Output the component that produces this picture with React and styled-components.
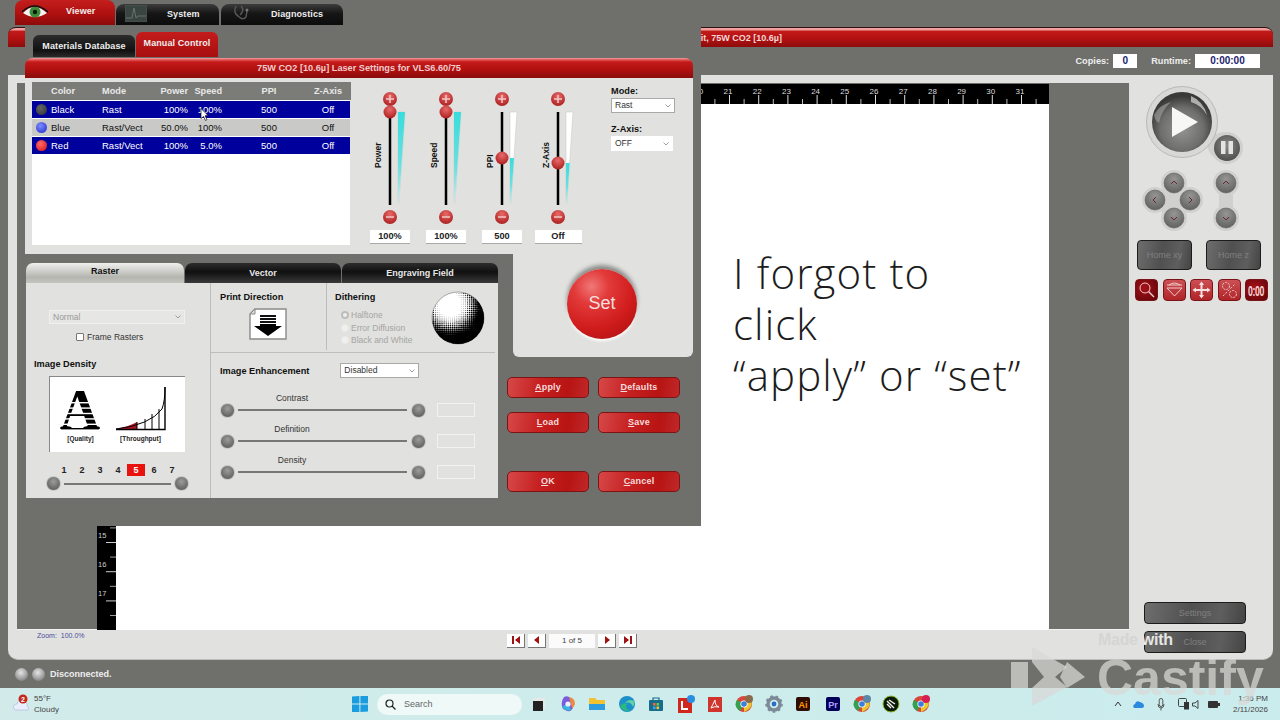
import React from "react";
import styled, { createGlobalStyle } from "styled-components";

const GREY = "#6f706c";
const LIGHT = "#e1e1df";
const FONT = `"Liberation Sans", Arial, sans-serif`;

const GlobalStyle = createGlobalStyle`
	html, body {
		margin: 0;
		padding: 0;
		background: ${GREY};
		font-family: ${FONT};
		overflow: hidden;
	}
	* {
		box-sizing: border-box;
	}
`;

const Page = styled.div`
	position: relative;
	width: 1280px;
	height: 720px;
	display: flex;
	flex-direction: column;
	overflow: hidden;
	background: ${GREY};
`;

const AppArea = styled.div`
	position: relative;
	height: 688px;
	display: flex;
	flex-direction: column;
`;

/* ---- top tabs ---- */
const TopTabs = styled.div`
	height: 25px;
	padding-left: 15px;
	display: flex;
	align-items: flex-end;
`;

const TopTab = styled.div`
	width: ${p => p.$w}px;
	height: ${p => (p.$active ? 25 : 21)}px;
	margin-right: ${p => p.$gap || 0}px;
	border-radius: 8px 8px 0 0;
	background: ${p =>
		p.$active
			? "linear-gradient(#c41e1e, #b01010 55%, #8c0a0a)"
			: "linear-gradient(#3c3c3c, #161616 45%, #0c0c0c)"};
	color: #eee;
	font-size: 9px;
	font-weight: bold;
	display: flex;
	align-items: center;
	padding-bottom: ${p => (p.$active ? 1 : 2)}px;
`;

const TabIcon = styled.svg`
	margin-left: ${p => p.$left}px;
	flex-shrink: 0;
`;

const TabText = styled.span`
	margin-left: ${p => p.$left}px;
	padding-bottom: ${p => p.$lift || 0}px;
	letter-spacing: 0.1px;
`;

/* ---- main window ---- */
const MainWindow = styled.div`
	margin: 2px 7px 0 8px;
	height: 633px;
	display: flex;
	flex-direction: column;
`;

const MainTitle = styled.div`
	height: 20px;
	border-top: 1px solid #301010;
	border-radius: 8px 8px 0 0;
	background: linear-gradient(#f0a0a0 0, #f0a0a0 2px, #c41a1a 3px, #b01010 60%, #8c0c0c);
	color: #f3d6d6;
	font-size: 9px;
	font-weight: bold;
	display: flex;
	justify-content: flex-end;
	align-items: center;
	padding-right: 491px;
`;

const InfoBar = styled.div`
	height: 28px;
	padding-right: 13px;
	display: flex;
	justify-content: flex-end;
	align-items: center;
	color: #eee;
	font-size: 9.2px;
	font-weight: bold;
`;

const InfoBox = styled.div`
	width: ${p => p.$w}px;
	height: 14px;
	margin: 0 ${p => p.$right}px 0 4px;
	background: #fff;
	color: #22226e;
	font-size: 10px;
	line-height: 14px;
	text-align: center;
`;

const MainBody = styled.div`
	flex: 1;
	display: flex;
	min-height: 0;
	background: ${LIGHT};
	border-radius: 0 0 10px 10px;
	border-bottom: 1px solid #bdbdba;
`;

const DocColumn = styled.div`
	flex: 1;
	display: flex;
	flex-direction: column;
	padding: 8px 0 0 9px;
`;

const Workspace = styled.div`
	height: 547px;
	padding: 1px 0 0 80px;
	background: ${GREY};
	border-bottom: 1px solid #f2f2f0;
	display: grid;
	grid-template-columns: 19px 933px;
	grid-template-rows: 20px 1fr;
`;

const RulerCorner = styled.div`
	background: #000;
`;

const RulerH = styled.svg`
	display: block;
	background: #000;
`;

const RulerV = styled.svg`
	display: block;
	background: #000;
`;

const Sheet = styled.div`
	background: #fff;
	padding: 143px 0 0 617px;
	font-family: "Open Sans", sans-serif;
	font-weight: 300;
	font-size: 42px;
	letter-spacing: 1.1px;
	line-height: 51px;
	color: #1c1c1c;
`;

const BottomStrip = styled.div`
	flex: 1;
	display: grid;
	grid-template-columns: 470px auto;
	padding-left: 20px;
`;

const ZoomLabel = styled.div`
	color: #4b4ba0;
	font-size: 7px;
	padding-top: 2px;
	word-spacing: 2px;
`;

const Pager = styled.div`
	display: flex;
	align-items: center;
	gap: 3px;
	height: 13px;
	margin-top: 4px;
`;

const PagerButton = styled.div`
	width: 18px;
	height: 14px;
	background: #fff;
	border-right: 1px solid #777;
	border-bottom: 1px solid #777;
	color: #a01010;
	display: flex;
	align-items: center;
	justify-content: center;
`;

const PagerField = styled.div`
	width: 46px;
	height: 14px;
	background: #fbfbfb;
	color: #444;
	font-size: 8px;
	line-height: 14px;
	text-align: center;
`;

const SidePanel = styled.div`
	width: 144px;
	display: flex;
	flex-direction: column;
	padding-bottom: 6px;
`;

const PlayGraphic = styled.svg`
	display: block;
	margin: 10px 0 0 16px;
`;

const PadGraphic = styled.svg`
	display: block;
	margin: 3px 0 0 11px;
`;

const HomeRow = styled.div`
	display: flex;
	gap: 14px;
	margin: 7px 0 0 8px;
`;

const GreyButton = styled.div`
	width: ${p => p.$w}px;
	height: ${p => p.$h}px;
	border: 1px solid #1c1c1c;
	border-radius: 4px;
	background: linear-gradient(100deg, #6e6e6e 0, #505050 45%, #5e5e5e 75%, #444 100%);
	color: #808080;
	font-size: 9px;
	display: flex;
	align-items: center;
	justify-content: center;
`;

const ToolRow = styled.div`
	display: flex;
	gap: 4.5px;
	margin: 9px 0 0 6px;
`;

const ToolButton = styled.div`
	width: 23px;
	height: 22px;
	border-radius: 4px;
	background: ${p =>
		p.$active
			? "radial-gradient(circle at 40% 40%, #a51218, #5e0408)"
			: "linear-gradient(#cc5054, #b02428)"};
	border: 1px solid #7a1418;
	display: flex;
	align-items: center;
	justify-content: center;
	color: #f5d5d5;
	font-size: 15px;
	font-weight: bold;
`;

const ToolClock = styled.span`
	display: block;
	transform: scaleX(0.58);
	letter-spacing: -0.5px;
`;

const SideBottom = styled.div`
	margin-top: auto;
	display: flex;
	flex-direction: column;
	gap: 7px;
	padding-left: 15px;
`;

const StatusBar = styled.div`
	height: 28px;
	padding-left: 15px;
	display: flex;
	align-items: center;
	gap: 4px;
	color: #eee;
	font-size: 9px;
	font-weight: bold;
`;

const StatusLight = styled.div`
	width: 13px;
	height: 13px;
	border-radius: 50%;
	background: radial-gradient(circle at 45% 35%, #e4e4e4, #9a9a9a 60%, #666);
`;

const StatusText = styled.span`
	margin-left: 1px;
`;

/* ---- dialog ---- */
const Dialog = styled.div`
	position: absolute;
	left: 25px;
	top: 27px;
	width: 676px;
	height: 499px;
	background: ${GREY};
	padding-right: 8px;
`;

const DialogTabs = styled.div`
	height: 31px;
	padding: 4px 0 0 8px;
	display: flex;
	align-items: flex-end;
	gap: 1px;
`;

const DialogTab = styled.div`
	width: ${p => p.$w}px;
	height: ${p => (p.$active ? 25 : 22)}px;
	margin-bottom: 1px;
	border-radius: 6px 6px 0 0;
	background: ${p =>
		p.$active ? "linear-gradient(#c41c1c, #a80e0e)" : "linear-gradient(#2c2c2c, #111 70%, #2a2a2a)"};
	color: #eee;
	font-size: 9px;
	font-weight: bold;
	letter-spacing: 0.1px;
	text-align: center;
	line-height: 22px;
`;

const DialogTitle = styled.div`
	height: 20px;
	border-radius: 8px 8px 0 0;
	background: linear-gradient(#f0a0a0 0, #e05050 2px, #c41a1a 4px, #b01010 60%, #8a0c0c);
	color: #f0cccc;
	font-size: 9.2px;
	font-weight: bold;
	text-align: center;
	line-height: 20px;
`;

const UpperPanel = styled.div`
	height: 176px;
	padding: 4px 0 0 7px;
	background: ${LIGHT};
	display: flex;
`;

const ColorTable = styled.div`
	position: relative;
	width: 318px;
	height: 163px;
	background: #fff;
	display: flex;
	flex-direction: column;
	gap: 1px;
	font-size: 9.5px;
`;

const GRID_COLS = "19px 51px 55px 31px 34px 94px 24px";

const TableHead = styled.div`
	height: 18px;
	margin-right: -1px;
	background: #7b7c78;
	color: #e8e8e8;
	font-size: 9.2px;
	font-weight: bold;
	display: grid;
	grid-template-columns: ${GRID_COLS};
	align-items: center;
`;

const TableRow = styled.div`
	height: 17px;
	background: ${p => (p.$selected ? "#00009c" : "#c9c9c7")};
	color: ${p => (p.$selected ? "#fff" : "#111")};
	display: grid;
	grid-template-columns: ${GRID_COLS};
	align-items: center;
`;

const Cell = styled.span`
	justify-self: ${p => p.$align || "start"};
	white-space: nowrap;
`;

const ColorDot = styled.span`
	justify-self: center;
	width: 11px;
	height: 11px;
	border-radius: 50%;
	background: radial-gradient(circle at 40% 35%, ${p => p.$light}, ${p => p.$dark});
`;

const Pointer = styled.svg`
	position: absolute;
	left: 168px;
	top: 26px;
`;

const SliderGroup = styled.div`
	display: flex;
	margin-left: 12px;
`;

const SliderCol = styled.div`
	position: relative;
	width: 56px;
	padding-top: 8px;
	display: flex;
	flex-direction: column;
	align-items: center;
`;

const SliderArt = styled.svg`
	display: block;
`;

const SliderLabel = styled.span`
	position: absolute;
	left: 11px;
	top: ${p => 25 + p.$drop}px;
	height: 96px;
	writing-mode: vertical-rl;
	transform: rotate(180deg);
	text-align: center;
	font-size: 8.5px;
	font-weight: bold;
	color: #111;
`;

const ValueBox = styled.div`
	flex-shrink: 0;
	width: ${p => p.$w}px;
	height: 14px;
	margin-top: 4px;
	background: #fff;
	border-bottom: 1px solid #aaa;
	font-size: 9.2px;
	font-weight: bold;
	line-height: 13px;
	text-align: center;
	color: #222;
`;

const ModeCol = styled.div`
	margin-left: 25px;
	padding-top: 4px;
	display: flex;
	flex-direction: column;
`;

const FieldLabel = styled.div`
	font-size: 9.2px;
	font-weight: bold;
	color: #111;
	margin-bottom: 2px;
	margin-top: ${p => p.$top || 0}px;
`;

const Select = styled.div`
	position: relative;
	width: ${p => p.$w}px;
	height: ${p => p.$h || 15}px;
	background: ${p => (p.$disabled ? "#e6e6e4" : "#fff")};
	border: 1px solid ${p => (p.$disabled ? "#f0f0ee" : p.$plain ? "#fff" : "#a9a9a9")};
	color: ${p => (p.$disabled ? "#999" : "#333")};
	font-size: 8.5px;
	line-height: ${p => (p.$h || 15) - 2}px;
	padding-left: 3px;
`;

const Caret = styled.svg`
	position: absolute;
	right: 3px;
	top: 50%;
	margin-top: -2px;
`;

const LowerRow = styled.div`
	display: flex;
`;

const TabPanel = styled.div`
	width: 472px;
	margin: 9px 0 0 1px;
`;

const PanelTabs = styled.div`
	display: flex;
	height: 20px;
	gap: 1px;
`;

const PanelTab = styled.div`
	width: ${p => p.$w}px;
	border-radius: 7px 7px 0 0;
	background: ${p =>
		p.$active ? "linear-gradient(#f0f0ee, #b5b5b0 70%, #c5c5c0)" : "linear-gradient(#2d2d2d, #101010 45%, #3a3a3a)"};
	color: ${p => (p.$active ? "#111" : "#e8e8e8")};
	font-size: 9px;
	font-weight: bold;
	line-height: ${p => (p.$active ? 17 : 20)}px;
	text-align: center;
`;

const PanelBody = styled.div`
	height: 215px;
	background: ${LIGHT};
	display: grid;
	grid-template-columns: 185px 1fr;
`;

const RasterCol = styled.div`
	border-right: 1px solid #bdbdba;
	display: flex;
	flex-direction: column;
`;

const NormalSelect = styled(Select)`
	margin: 27px 0 0 23px;
`;

const FrameRow = styled.label`
	display: flex;
	align-items: center;
	gap: 3px;
	margin: 8px 0 0 50px;
	font-size: 8.5px;
	color: #333;
`;

const CheckBox = styled.span`
	width: 8px;
	height: 8px;
	background: #fff;
	border: 1px solid #777;
	border-radius: 1px;
`;

const GroupLabel = styled.div`
	font-size: 9.2px;
	font-weight: bold;
	color: #111;
`;

const DensityLabel = styled(GroupLabel)`
	margin: 17px 0 0 8px;
`;

const DensityBox = styled.div`
	width: 136px;
	height: 76px;
	margin: 7px 0 0 23px;
	background: #fff;
	border-top: 1px solid #888;
	border-left: 1px solid #888;
`;

const DensityArt = styled.svg`
	display: block;
`;

const NumberRow = styled.div`
	display: grid;
	grid-template-columns: repeat(7, 18px);
	margin: 12px 0 0 29px;
	height: 12px;
	font-size: 9px;
	font-weight: bold;
	text-align: center;
	line-height: 12px;
	color: #222;
`;

const NumberCell = styled.span`
	background: ${p => (p.$active ? "#e8120f" : "transparent")};
	color: ${p => (p.$active ? "#fff" : "#222")};
`;

const Knob = styled.span`
	flex-shrink: 0;
	display: block;
	width: 15px;
	height: 15px;
	border-radius: 50%;
	background: radial-gradient(circle at 50% 35%, #9c9c9a, #6a6a68 65%, #555);
	border: 1px solid #c6c6c4;
`;

const DensitySlider = styled.div`
	display: flex;
	align-items: center;
	gap: 3px;
	margin: 0 0 0 20px;
`;

const SlideLine = styled.span`
	display: block;
	flex-shrink: 0;
	width: ${p => p.$w}px;
	height: 2px;
	background: #777;
`;

const OptionsCol = styled.div`
	display: flex;
	flex-direction: column;
`;

const TopOptions = styled.div`
	height: 70px;
	display: flex;
	border-bottom: 1px solid #bdbdba;
	margin-right: 3px;
`;

const PrintBox = styled.div`
	width: 116px;
	padding: 9px 0 0 9px;
	border-right: 1px solid #bdbdba;
	margin-bottom: 2px;
`;

const PrintIcon = styled.svg`
	display: block;
	margin: 6px 0 0 29px;
`;

const DitherBox = styled.div`
	position: relative;
	flex: 1;
	padding: 9px 0 0 8px;
`;

const RadioRow = styled.div`
	display: flex;
	align-items: center;
	gap: 2px;
	height: 12.5px;
	margin-left: 6px;
	font-size: 8.5px;
	color: #a5a5a3;
`;

const RadioList = styled.div`
	margin-top: 7px;
`;

const Radio = styled.span`
	width: 8px;
	height: 8px;
	border-radius: 50%;
	background: #efefed;
	border: ${p => (p.$on ? "2px solid #bdbdbb" : "1px solid #ebebe9")};
`;

const Sphere = styled.svg`
	position: absolute;
	left: 104px;
	top: 8px;
`;

const EnhanceHead = styled.div`
	display: flex;
	align-items: center;
	padding: 10px 0 0 9px;
`;

const EnhanceSelect = styled(Select)`
	margin-left: 31px;
`;

const EnhanceList = styled.div`
	margin-top: 8.5px;
	padding-left: 9px;
`;

const EnhanceRow = styled.div`
	height: 31px;
	display: flex;
	align-items: flex-end;
`;

const EnhanceTrack = styled.div`
	width: 176px;
	padding: 0 3px 6.5px;
	display: flex;
	flex-direction: column;
`;

const EnhanceName = styled.div`
	width: 108px;
	text-align: center;
	font-size: 8.5px;
	color: #333;
	line-height: 12px;
	margin-bottom: 5px;
`;

const EmptyField = styled.div`
	width: 38px;
	height: 14px;
	margin: 0 0 0.5px 11px;
	border: 1px solid #f2f2f0;
`;

const SetCol = styled.div`
	width: 195px;
`;

const SetPanel = styled.div`
	width: 180px;
	height: 103px;
	margin-left: 15px;
	background: ${LIGHT};
	border-radius: 0 0 6px 6px;
	display: flex;
	align-items: center;
	justify-content: center;
	padding: 0 2px 4px 0;
`;

const SetButton = styled.div`
	width: 70px;
	height: 70px;
	border-radius: 50%;
	background: radial-gradient(circle at 35% 25%, #f07878 0, #e23a3a 25%, #d01c1c 60%, #a80e0e 100%);
	box-shadow: 0 -4px 4px #8a8a88, 0 2px 3px #fff;
	color: #f6dede;
	font-size: 18px;
	display: flex;
	align-items: center;
	justify-content: center;
`;

const ActionGrid = styled.div`
	display: grid;
	grid-template-columns: 82px 82px;
	column-gap: 9px;
	margin: 20px 0 0 9px;
`;

const RedButton = styled.div`
	height: 21px;
	margin-bottom: ${p => p.$gap}px;
	border: 1px solid #7c1414;
	border-radius: 5px;
	background: linear-gradient(100deg, #d64848 0, #c62020 40%, #b81414 75%, #c02828 100%);
	color: #f3dcdc;
	font-size: 9px;
	font-weight: bold;
	line-height: 19px;
	text-align: center;
	letter-spacing: 0.2px;
	u {
		text-underline-offset: 1px;
	}
`;

/* ---- taskbar ---- */
const Taskbar = styled.div`
	height: 32px;
	background: linear-gradient(90deg, #d2ebea, #cdeceb 50%, #cbeced);
	display: flex;
	align-items: center;
	position: relative;
`;

const Weather = styled.div`
	width: 352px;
	padding-left: 12px;
	display: flex;
	align-items: center;
	gap: 4px;
	font-size: 8px;
	color: #333;
	line-height: 11px;
`;

const WeatherLines = styled.div`
	color: #444;
`;

const Search = styled.div`
	width: 145px;
	height: 21px;
	margin: 0 0 0 9px;
	border-radius: 11px;
	background: #eef9f8;
	padding-left: 8px;
	display: flex;
	align-items: center;
	gap: 8px;
	font-size: 9px;
	color: #666;
`;

const TrayIcons = styled.div`
	display: flex;
	align-items: center;
	margin-left: 2px;
`;

const AppSlot = styled.div`
	width: 29.4px;
	display: flex;
	justify-content: center;
`;

const Tray = styled.div`
	margin-left: auto;
	display: flex;
	align-items: center;
	padding-right: 12px;
`;

const Clock = styled.div`
	margin-left: 13px;
	text-align: right;
	font-size: 8px;
	line-height: 11px;
	color: #444;
`;

const TraySvg = styled.svg`
	display: block;
	margin-left: ${p => p.$left}px;
`;

/* ---- watermark ---- */
const Watermark = styled.div`
	position: absolute;
	left: 1008px;
	top: 630px;
	width: 272px;
	height: 90px;
	pointer-events: none;
`;

const WatermarkLogo = styled.svg`
	position: absolute;
	left: 0;
	top: 17px;
`;

const MadeWith = styled.div`
	position: absolute;
	left: 90px;
	top: 1px;
	font-size: 16px;
	font-weight: bold;
	color: rgba(205, 205, 203, 0.6);
	letter-spacing: -0.3px;
	span {
		color: #e6e6e4;
	}
`;

const Brand = styled.div`
	position: absolute;
	left: 89px;
	top: 19px;
	font-size: 50px;
	font-weight: bold;
	color: rgba(216, 216, 214, 0.72);
`;

const rows = [
	{ name: "Black", mode: "Rast", power: "100%", speed: "100%", selected: true, light: "#666", dark: "#2c2c34" },
	{ name: "Blue", mode: "Rast/Vect", power: "50.0%", speed: "100%", light: "#7f8cff", dark: "#1a26c8" },
	{ name: "Red", mode: "Rast/Vect", power: "100%", speed: "5.0%", selected: true, light: "#ff6a6a", dark: "#d80e0e" }
];

const sliders = [
	{ id: "power", label: "Power", value: "100%", level: 22, drop: 0, box: 40 },
	{ id: "speed", label: "Speed", value: "100%", level: 22, drop: 0, box: 40 },
	{ id: "ppi", label: "PPI", value: "500", level: 68, drop: 6, box: 40 },
	{ id: "z", label: "Z-Axis", value: "Off", level: 73, drop: 0, box: 47 }
];

const range = (from, to) => Array.from({ length: to - from + 1 }, (_, i) => from + i);

const CaretIcon = () => (
	<Caret width="6" height="4" viewBox="0 0 6 4">
		<path d="M0.5 0.5 L3 3 L5.5 0.5" fill="none" stroke="#888" strokeWidth="0.8" />
	</Caret>
);

const TopRuler = () => (
	<RulerH width="933" height="20" viewBox="0 0 933 20">
		{range(1, 31).map(n => {
			const x = 613 + (n - 21) * 29.2;
			return (
				<g key={n}>
					<text x={x - 1} y="10" fontSize="8" fill="#ddd" textAnchor="middle" fontFamily={FONT}>
						{n}
					</text>
					<rect x={x} y="11" width="1" height="9" fill="#ddd" />
					<rect x={x + 14.6} y="15" width="1" height="5" fill="#bbb" />
				</g>
			);
		})}
	</RulerH>
);

const SideRuler = () => (
	<RulerV width="19" height="526" viewBox="0 0 19 526">
		{range(1, 17).map(n => {
			const y = 438 + (n - 15) * 29.2;
			return (
				<g key={n}>
					<text x="1" y={y - 4} fontSize="7.5" fill="#ccc" fontFamily={FONT}>
						{n}
					</text>
					<rect x="9" y={y} width="10" height="1" fill="#ccc" />
					<rect x="13" y={y + 14.6} width="6" height="1" fill="#999" />
				</g>
			);
		})}
	</RulerV>
);

const Eye = () => (
	<TabIcon $left={7} width="26" height="14" viewBox="0 0 26 14">
		<path d="M1 8 Q12 -4 25 8 Q13 16 1 8 Z" fill="#f4f4f4" />
		<circle cx="13" cy="7" r="5.5" fill="#3f8a3a" />
		<circle cx="13" cy="7" r="2.2" fill="#0c1a0c" />
		<path d="M0 7 Q12 -5 26 7" fill="none" stroke="#111" strokeWidth="1.5" />
	</TabIcon>
);

const PulseBox = () => (
	<TabIcon $left={9} width="22" height="17" viewBox="0 0 22 17">
		<rect width="22" height="17" fill="#3a4440" stroke="#4d5652" />
		<path d="M1 13 H7 L9 3 L11 13 L13 11 H21" fill="none" stroke="#66736c" />
	</TabIcon>
);

const Stethoscope = () => (
	<TabIcon $left={12} width="16" height="18" viewBox="0 0 16 18">
		<path d="M3 1 Q0 8 5 11 Q10 16 13 12 L14 6 M8 1 Q12 5 7 10" fill="none" stroke="#555" strokeWidth="1.5" />
		<circle cx="14" cy="5" r="1.5" fill="#777" />
	</TabIcon>
);

const PlayCluster = () => (
	<PlayGraphic width="100" height="80" viewBox="0 0 100 80">
		<defs>
			<radialGradient id="playFill" cx="50%" cy="62%" r="55%">
				<stop offset="0" stopColor="#949492" />
				<stop offset="0.65" stopColor="#6e6e6c" />
				<stop offset="1" stopColor="#3a3a38" />
			</radialGradient>
			<radialGradient id="pauseFill" cx="50%" cy="40%" r="65%">
				<stop offset="0" stopColor="#8a8a88" />
				<stop offset="1" stopColor="#4a4a48" />
			</radialGradient>
		</defs>
		<path d="M56 50 Q70 50 78 47 L90 60 L82 79 L66 70 Z" fill="#d0d0ce" />
		<circle cx="37" cy="37" r="35.5" fill="#d8d8d6" stroke="#b9b9b7" />
		<circle cx="82" cy="63" r="16" fill="#d0d0ce" />
		<circle cx="37" cy="37" r="30" fill="url(#playFill)" />
		<path d="M46 11 Q58 16 62 30 Q56 20 46 17 Z" fill="#c8c8c6" opacity="0.8" />
		<path d="M9 30 Q14 20 26 17 Q16 26 14 38 Q10 36 9 30 Z" fill="#a5a5a3" opacity="0.6" />
		<path d="M27 22 L53 37 L27 52 Z" fill="#f7f7f5" />
		<circle cx="82" cy="63" r="13" fill="url(#pauseFill)" />
		<rect x="76" y="56" width="4.5" height="13" fill="#e4e4e2" />
		<rect x="83.5" y="56" width="4.5" height="13" fill="#e4e4e2" />
	</PlayGraphic>
);

const padButtons = [
	{ x: 34, y: 15, d: "M-3 1 L0 -2 L3 1" },
	{ x: 34, y: 50, d: "M-3 -1 L0 2 L3 -1" },
	{ x: 15, y: 32, d: "M1 -3 L-2 0 L1 3" },
	{ x: 50, y: 32, d: "M-1 -3 L2 0 L-1 3" },
	{ x: 86, y: 15, d: "M-3 1 L0 -2 L3 1" },
	{ x: 86, y: 50, d: "M-3 -1 L0 2 L3 -1" }
];

const MotionPad = () => (
	<PadGraphic width="105" height="65" viewBox="0 0 105 65">
		<defs>
			<radialGradient id="padFill" cx="50%" cy="30%" r="75%">
				<stop offset="0" stopColor="#969694" />
				<stop offset="1" stopColor="#5e5e5c" />
			</radialGradient>
		</defs>
		<rect x="22" y="15" width="24" height="35" fill="#d0d0ce" />
		<rect x="15" y="22" width="35" height="20" fill="#d0d0ce" />
		<rect x="79" y="15" width="14" height="35" fill="#d0d0ce" />
		{padButtons.map(b => (
			<circle key={`h${b.x}${b.y}`} cx={b.x} cy={b.y} r="13" fill="#d0d0ce" />
		))}
		{padButtons.map(b => (
			<g key={`b${b.x}${b.y}`} transform={`translate(${b.x} ${b.y})`}>
				<circle r="10" fill="url(#padFill)" stroke="#5e5e5c" strokeWidth="0.6" />
				<path d={b.d} fill="none" stroke="#6a2432" strokeWidth="1" />
			</g>
		))}
	</PadGraphic>
);

const ToolIcon = ({ children }) => (
	<svg width="19" height="18" viewBox="0 0 19 18" fill="none" stroke="#f0caca" strokeWidth="1">
		{children}
	</svg>
);

const Slider = ({ id, level }) => {
	const edge = y => 36 + 1 + 6 * (1 - (y - 22) / 91);
	const Button = ({ cy, sign }) => (
		<g>
			<circle cx="28" cy={cy} r="7" fill={`url(#btn${id})`} />
			<rect x="24" y={cy - 0.75} width="8" height="1.5" fill="#f3c9c9" />
			{sign && <rect x="27.25" y={cy - 4} width="1.5" height="8" fill="#f3c9c9" />}
		</g>
	);
	return (
		<SliderArt width="56" height="136" viewBox="0 0 56 136">
			<defs>
				<radialGradient id={`btn${id}`} cx="50%" cy="30%" r="75%">
					<stop offset="0" stopColor="#e86a6a" />
					<stop offset="1" stopColor="#a81a1a" />
				</radialGradient>
				<linearGradient id={`cyan${id}`} x1="0" y1="0" x2="0" y2="1">
					<stop offset="0" stopColor="#38dcdc" />
					<stop offset="0.6" stopColor="#6ddfdf" />
					<stop offset="1" stopColor="#cfe6e6" />
				</linearGradient>
			</defs>
			<rect x="26.75" y="22" width="2.5" height="93" fill="#000" />
			<path d="M36 22 H43 L37 113 H36 Z" fill="#fff" stroke="#c4c4c2" strokeWidth="0.5" />
			<path d={`M36 ${level} H${edge(level)} L37 113 H36 Z`} fill={`url(#cyan${id})`} />
			<Button cy={9} sign />
			<Button cy={127} />
			<circle cx="28" cy={level} r="6.5" fill={`url(#btn${id})`} />
		</SliderArt>
	);
};

const DensityDrawing = () => (
	<DensityArt width="135" height="75" viewBox="0 0 135 75">
		<text x="30" y="52" fontSize="56" fontWeight="bold" fontFamily={`"Liberation Serif", serif`} textAnchor="middle" fill="#000">
			A
		</text>
		{range(0, 4).map(i => (
			<rect key={i} x="8" y={25 + i * 5.4} width="46" height="1.4" fill="#fff" />
		))}
		<rect x="11" y="51" width="38" height="1.4" fill="#000" />
		<path d="M66 52 Q78 50 87 45 L87 52 Z" fill="#a81420" />
		<path d="M66 52 Q100 48 112 32 Q115 24 115 10" fill="none" stroke="#000" strokeWidth="1" />
		<path d="M66 52.5 H115 V10" fill="none" stroke="#000" strokeWidth="1.4" />
		<path d="M87 45 V52 M95 42 V52 M102 37 V52 M109 32 V52" stroke="#000" strokeWidth="1" />
		<text x="30.5" y="64" fontSize="6.5" fontWeight="bold" textAnchor="middle" fontFamily={FONT} fill="#222">
			[Quality]
		</text>
		<text x="90.5" y="64" fontSize="6.5" fontWeight="bold" textAnchor="middle" fontFamily={FONT} fill="#222">
			[Throughput]
		</text>
	</DensityArt>
);

const HalftoneBall = () => {
	const dots = [];
	for (let y = 0.5; y < 54; y += 1.9) {
		for (let x = 0.5; x < 54; x += 1.9) {
			const dist = Math.hypot(x - 19, y - 14) / 36;
			const size = Math.min(1.45, Math.max(0, (dist - 0.25) * 2.2));
			if (size > 0.12) dots.push(<circle key={`${x}-${y}`} cx={x} cy={y} r={size} fill="#000" />);
		}
	}
	return (
		<Sphere width="54" height="54" viewBox="0 0 54 54">
			<defs>
				<clipPath id="ballClip">
					<circle cx="27" cy="27" r="26" />
				</clipPath>
			</defs>
			<circle cx="27" cy="27" r="26" fill="#fff" stroke="#777" strokeWidth="0.6" />
			<g clipPath="url(#ballClip)">{dots}</g>
		</Sphere>
	);
};

const Icon = ({ children, w = 18, h = 18 }) => (
	<svg width={w} height={h} viewBox={`0 0 ${w} ${h}`}>
		{children}
	</svg>
);

const ChromeMark = ({ badge }) => (
	<Icon>
		<circle cx="9" cy="9" r="8" fill="#d8463a" />
		<path d="M2 5 L9 9 L5 16 Q-2 11 2 5 Z" fill="#35a04e" />
		<path d="M9 9 L16 6 Q19 13 9 17 Z" fill="#e9c72e" />
		<circle cx="9" cy="9" r="3.6" fill="#fff" />
		<circle cx="9" cy="9" r="2.8" fill="#3e7de0" />
		{badge && <circle cx="14" cy="4" r="4" fill={badge} />}
	</Icon>
);

const appIcons = [
	<Icon key="tasks">
		<rect x="4" y="3" width="11" height="11" fill="#e8e8e8" />
		<rect x="3" y="6" width="10" height="10" fill="#222" />
	</Icon>,
	<Icon key="copilot">
		<path d="M5 2 Q9 0 11 3 L14 12 Q13 17 8 16 L4 14 Q1 8 5 2 Z" fill="#7a5be0" />
		<path d="M10 2 Q16 3 16 9 Q15 12 13 13 Z" fill="#ee8a3c" />
		<path d="M3 12 Q7 17 12 15 L9 8 Z" fill="#36b6d8" />
		<circle cx="9" cy="9" r="2.6" fill="#eef" />
	</Icon>,
	<Icon key="folder">
		<path d="M1 3 H7 L9 5 H17 V15 H1 Z" fill="#f2c230" />
		<rect x="1" y="9" width="16" height="6" fill="#2f9ce0" />
	</Icon>,
	<Icon key="edge">
		<circle cx="9" cy="9" r="8" fill="#1b90c9" />
		<path d="M2 11 Q4 17 12 16 Q6 13 9 9 Q5 7 2 11 Z" fill="#2ab87e" />
		<path d="M7 8 Q13 6 15 12 Q17 9 16 6 Q11 3 7 8 Z" fill="#62d2a2" />
	</Icon>,
	<Icon key="store">
		<rect x="2" y="5" width="14" height="11" rx="1" fill="#176c8c" />
		<path d="M6 5 V3 H12 V5" fill="none" stroke="#176c8c" strokeWidth="1.2" />
		<rect x="6" y="8" width="2.6" height="2.6" fill="#f2683a" />
		<rect x="9.5" y="8" width="2.6" height="2.6" fill="#7cc242" />
		<rect x="6" y="11.5" width="2.6" height="2.6" fill="#3aa6e8" />
		<rect x="9.5" y="11.5" width="2.6" height="2.6" fill="#f4c430" />
	</Icon>,
	<Icon key="lastpass">
		<rect x="1" y="3" width="14" height="15" fill="#d2271d" />
		<path d="M5 6 V14 H11" fill="none" stroke="#fff" strokeWidth="2" />
		<circle cx="14" cy="4" r="4" fill="#2a8ee0" />
	</Icon>,
	<Icon key="acrobat">
		<rect x="2" y="2" width="14" height="15" fill="#d0342c" />
		<path d="M5 13 Q9 5 9 5 Q9 11 13 12 Q8 11 5 13 Z" fill="none" stroke="#fff" strokeWidth="1" />
	</Icon>,
	<ChromeMark key="c1" badge="#8a6a4a" />,
	<Icon key="gear">
		<circle cx="9" cy="9" r="6" fill="none" stroke="#7b8a96" strokeWidth="3.4" />
		<circle cx="9" cy="9" r="8" fill="none" stroke="#7b8a96" strokeWidth="1.6" strokeDasharray="2.6 3" />
		<circle cx="9" cy="9" r="2.4" fill="#2a6cc8" />
	</Icon>,
	<Icon key="ai">
		<rect x="2" y="2" width="14" height="14" rx="2" fill="#2e0d00" />
		<text x="9" y="12.5" fontSize="9" fontWeight="bold" textAnchor="middle" fontFamily={FONT} fill="#ff9a00">
			Ai
		</text>
	</Icon>,
	<Icon key="pr">
		<rect x="2" y="2" width="14" height="14" rx="2" fill="#00005b" />
		<text x="9" y="12.5" fontSize="9" fontWeight="bold" textAnchor="middle" fontFamily={FONT} fill="#b3a2ff">
			Pr
		</text>
	</Icon>,
	<ChromeMark key="c2" badge="#5c88a8" />,
	<Icon key="green">
		<circle cx="9" cy="9" r="8" fill="#0d1a06" stroke="#8ab32a" strokeWidth="1" />
		<path d="M5 6 L12 13 M7 5 L13 9 M5 9 L9 13" stroke="#f2f2f2" strokeWidth="1.4" />
	</Icon>,
	<ChromeMark key="c3" badge="#d81e4e" />
];

const App = () => (
	<Page>
		<GlobalStyle />
		<AppArea>
			<TopTabs>
				<TopTab $w={100} $gap={1} $active>
					<Eye />
					<TabText $left={18} $lift={3}>Viewer</TabText>
				</TopTab>
				<TopTab $w={103} $gap={2}>
					<PulseBox />
					<TabText $left={20}>System</TabText>
				</TopTab>
				<TopTab $w={122}>
					<Stethoscope />
					<TabText $left={22}>Diagnostics</TabText>
				</TopTab>
			</TopTabs>

			<MainWindow>
				<MainTitle>Laser Unit, 75W CO2 [10.6µ]</MainTitle>
				<InfoBar>
					Copies:
					<InfoBox $w={24} $right={14}>0</InfoBox>
					Runtime:
					<InfoBox $w={65} $right={0}>0:00:00</InfoBox>
				</InfoBar>
				<MainBody>
					<DocColumn>
						<Workspace>
							<RulerCorner />
							<TopRuler />
							<SideRuler />
							<Sheet>
								I forgot to
								<br />
								click
								<br />
								“apply” or “set”
							</Sheet>
						</Workspace>
						<BottomStrip>
							<ZoomLabel>Zoom: 100.0%</ZoomLabel>
							<Pager>
								<PagerButton>
									<svg width="8" height="8" viewBox="0 0 8 8" fill="#a01010"><rect width="2" height="8" /><path d="M8 0 V8 L3 4 Z" /></svg>
								</PagerButton>
								<PagerButton>
									<svg width="6" height="8" viewBox="0 0 6 8" fill="#a01010"><path d="M5 0 V8 L0 4 Z" /></svg>
								</PagerButton>
								<PagerField>1 of 5</PagerField>
								<PagerButton>
									<svg width="6" height="8" viewBox="0 0 6 8" fill="#a01010"><path d="M1 0 V8 L6 4 Z" /></svg>
								</PagerButton>
								<PagerButton>
									<svg width="8" height="8" viewBox="0 0 8 8" fill="#a01010"><path d="M0 0 V8 L5 4 Z" /><rect x="6" width="2" height="8" /></svg>
								</PagerButton>
							</Pager>
						</BottomStrip>
					</DocColumn>
					<SidePanel>
						<PlayCluster />
						<MotionPad />
						<HomeRow>
							<GreyButton $w={55} $h={30}>Home xy</GreyButton>
							<GreyButton $w={55} $h={30}>Home z</GreyButton>
						</HomeRow>
						<ToolRow>
							<ToolButton $active>
								<ToolIcon>
									<circle cx="8" cy="7" r="5" />
									<path d="M11.5 10.5 L17 16" strokeWidth="1.4" />
								</ToolIcon>
							</ToolButton>
							<ToolButton>
								<ToolIcon>
									<path d="M2 4 H17 M2 7 H17 L9.5 15 Z M4 4 Q9 0 15 4" />
								</ToolIcon>
							</ToolButton>
							<ToolButton>
								<ToolIcon>
									<path d="M9.5 2 V16 M2 9 H17" strokeWidth="2" stroke="#f7e0e0" />
									<path d="M9.5 0.5 L7 4 H12 Z M9.5 17.5 L7 14 H12 Z M0.5 9 L4 6.5 V11.5 Z M18.5 9 L15 6.5 V11.5 Z" fill="#f7e0e0" stroke="none" />
								</ToolIcon>
							</ToolButton>
							<ToolButton>
								<ToolIcon>
									<circle cx="6" cy="5" r="3.5" strokeDasharray="2 1" />
									<circle cx="13" cy="13" r="3.5" strokeDasharray="2 1" />
									<path d="M3 15 L15 3" strokeDasharray="2 1.5" />
								</ToolIcon>
							</ToolButton>
							<ToolButton $active><ToolClock>0:00</ToolClock></ToolButton>
						</ToolRow>
						<SideBottom>
							<GreyButton $w={102} $h={22}>Settings</GreyButton>
							<GreyButton $w={102} $h={22}>Close</GreyButton>
						</SideBottom>
					</SidePanel>
				</MainBody>
			</MainWindow>

			<StatusBar>
				<StatusLight />
				<StatusLight />
				<StatusText>Disconnected.</StatusText>
			</StatusBar>

			<Dialog>
				<DialogTabs>
					<DialogTab $w={102}>Materials Database</DialogTab>
					<DialogTab $w={82} $active>Manual Control</DialogTab>
				</DialogTabs>
				<DialogTitle>75W CO2 [10.6µ] Laser Settings for VLS6.60/75</DialogTitle>
				<UpperPanel>
					<ColorTable>
						<TableHead>
							<span />
							<Cell>Color</Cell>
							<Cell>Mode</Cell>
							<Cell $align="end">Power</Cell>
							<Cell $align="end">Speed</Cell>
							<Cell $align="center">PPI</Cell>
							<Cell $align="center">Z-Axis</Cell>
						</TableHead>
						{rows.map(row => (
							<TableRow key={row.name} $selected={row.selected}>
								<ColorDot $light={row.light} $dark={row.dark} />
								<Cell>{row.name}</Cell>
								<Cell>{row.mode}</Cell>
								<Cell $align="end">{row.power}</Cell>
								<Cell $align="end">{row.speed}</Cell>
								<Cell $align="center">500</Cell>
								<Cell $align="center">Off</Cell>
							</TableRow>
						))}
						<Pointer width="9" height="13" viewBox="0 0 9 13">
							<path d="M1 0.5 V10.5 L3.5 8.5 L5.5 12.5 L7 11.5 L5 7.8 L8 7.5 Z" fill="#fff" stroke="#111" strokeWidth="0.7" />
						</Pointer>
					</ColorTable>
					<SliderGroup>
						{sliders.map(s => (
							<SliderCol key={s.id}>
								<Slider id={s.id} level={s.level} />
								<SliderLabel $drop={s.drop}>{s.label}</SliderLabel>
								<ValueBox $w={s.box}>{s.value}</ValueBox>
							</SliderCol>
						))}
					</SliderGroup>
					<ModeCol>
						<FieldLabel>Mode:</FieldLabel>
						<Select $w={64}>
							Rast
							<CaretIcon />
						</Select>
						<FieldLabel $top={11}>Z-Axis:</FieldLabel>
						<Select $w={62} $plain>
							OFF
							<CaretIcon />
						</Select>
					</ModeCol>
				</UpperPanel>
				<LowerRow>
					<TabPanel>
						<PanelTabs>
							<PanelTab $w={158} $active>Raster</PanelTab>
							<PanelTab $w={156}>Vector</PanelTab>
							<PanelTab $w={156}>Engraving Field</PanelTab>
						</PanelTabs>
						<PanelBody>
							<RasterCol>
								<NormalSelect $w={136} $h={14} $disabled>
									Normal
									<CaretIcon />
								</NormalSelect>
								<FrameRow>
									<CheckBox />
									Frame Rasters
								</FrameRow>
								<DensityLabel>Image Density</DensityLabel>
								<DensityBox>
									<DensityDrawing />
								</DensityBox>
								<NumberRow>
									{range(1, 7).map(n => (
										<NumberCell key={n} $active={n === 5}>{n}</NumberCell>
									))}
								</NumberRow>
								<DensitySlider>
									<Knob />
									<SlideLine $w={107} />
									<Knob />
								</DensitySlider>
							</RasterCol>
							<OptionsCol>
								<TopOptions>
									<PrintBox>
										<GroupLabel>Print Direction</GroupLabel>
										<PrintIcon width="38" height="32" viewBox="0 0 38 32">
											<path d="M6 1 H37 V31 H1 V6 Z" fill="#fff" stroke="#8a8a88" strokeWidth="1.4" />
											<path d="M1 6 H6 V1 Z" fill="#ddd" stroke="#8a8a88" />
											<rect x="11" y="7" width="16" height="2" fill="#111" />
											<rect x="11" y="10" width="16" height="2" fill="#111" />
											<rect x="11" y="13" width="16" height="2" fill="#111" />
											<path d="M11 16 H27 V18 H33 L19 28 L5 18 H11 Z" fill="#000" />
										</PrintIcon>
									</PrintBox>
									<DitherBox>
										<GroupLabel>Dithering</GroupLabel>
										<RadioList>
											<RadioRow><Radio $on />Halftone</RadioRow>
											<RadioRow><Radio />Error Diffusion</RadioRow>
											<RadioRow><Radio />Black and White</RadioRow>
										</RadioList>
										<HalftoneBall />
									</DitherBox>
								</TopOptions>
								<EnhanceHead>
									<GroupLabel>Image Enhancement</GroupLabel>
									<EnhanceSelect $w={79}>
										Disabled
										<CaretIcon />
									</EnhanceSelect>
								</EnhanceHead>
								<EnhanceList>
									{["Contrast", "Definition", "Density"].map(name => (
										<EnhanceRow key={name}>
											<Knob />
											<EnhanceTrack>
												<EnhanceName>{name}</EnhanceName>
												<SlideLine $w={169} />
											</EnhanceTrack>
											<Knob />
											<EmptyField />
										</EnhanceRow>
									))}
								</EnhanceList>
							</OptionsCol>
						</PanelBody>
					</TabPanel>
					<SetCol>
						<SetPanel>
							<SetButton>Set</SetButton>
						</SetPanel>
						<ActionGrid>
							<RedButton $gap={14}><u>A</u>pply</RedButton>
							<RedButton $gap={14}><u>D</u>efaults</RedButton>
							<RedButton $gap={38}><u>L</u>oad</RedButton>
							<RedButton $gap={38}><u>S</u>ave</RedButton>
							<RedButton $gap={0}><u>O</u>K</RedButton>
							<RedButton $gap={0}><u>C</u>ancel</RedButton>
						</ActionGrid>
					</SetCol>
				</LowerRow>
			</Dialog>
		</AppArea>

		<Taskbar>
			<Weather>
				<Icon w={18} h={20}>
					<path d="M2 15 Q0 10 5 10 Q6 5 11 7 Q16 8 15 12 Q18 14 16 16 H3 Z" fill="#e8eefb" stroke="#aab4d8" strokeWidth="0.6" />
					<circle cx="11" cy="5" r="4.5" fill="#c4281c" />
					<text x="11" y="7.5" fontSize="7" fontWeight="bold" textAnchor="middle" fontFamily={FONT} fill="#fff">2</text>
				</Icon>
				<WeatherLines>
					55°F
					<br />
					Cloudy
				</WeatherLines>
			</Weather>
			<Icon w={16} h={16}>
				<path d="M0 0.5 L7.4 0 V7.4 H0 Z M8.4 0 H16 V7.4 H8.4 Z M0 8.4 H7.4 V16 H0 Z M8.4 8.4 H16 V15.5 L8.4 16 Z" fill="#1a9cdf" />
			</Icon>
			<Search>
				<svg width="11" height="11" viewBox="0 0 11 11" fill="none" stroke="#222" strokeWidth="1.2">
					<circle cx="4.5" cy="4.5" r="3.5" />
					<path d="M7 7 L10.5 10.5" />
				</svg>
				Search
			</Search>
			<TrayIcons>
				{appIcons.map(icon => (
					<AppSlot key={icon.key}>{icon}</AppSlot>
				))}
			</TrayIcons>
			<Tray>
				<TraySvg $left={0} width="8" height="6" viewBox="0 0 8 6"><path d="M1 5 L4 1 L7 5" fill="none" stroke="#333" strokeWidth="1" /></TraySvg>
				<TraySvg $left={10} width="13" height="9" viewBox="0 0 13 9"><path d="M2 8 Q0 5 3 4 Q4 0 8 2 Q12 3 12 6 Q12 8 10 8 Z" fill="#2a8ae0" /></TraySvg>
				<TraySvg $left={12} width="8" height="13" viewBox="0 0 8 13"><rect x="2.2" y="0.5" width="3.6" height="8" rx="1.8" fill="none" stroke="#555" /><path d="M1 6 Q1 10 4 10 Q7 10 7 6 M4 10 V12.5" fill="none" stroke="#555" /></TraySvg>
				<TraySvg $left={13} width="12" height="12" viewBox="0 0 12 12"><rect x="0.5" y="0.5" width="8" height="8" rx="1" fill="none" stroke="#444" /><rect x="6" y="4" width="5" height="7.5" fill="#333" /></TraySvg>
				<TraySvg $left={2} width="9" height="9" viewBox="0 0 9 9"><path d="M0.5 3 H3 L6 0.5 V8.5 L3 6 H0.5 Z" fill="none" stroke="#444" /></TraySvg>
				<TraySvg $left={7} width="12" height="9" viewBox="0 0 12 9"><rect x="0" y="1" width="10" height="7" rx="1" fill="#333" /><rect x="10" y="3" width="2" height="3" fill="#333" /></TraySvg>
				<Clock>
					1:36 PM
					<br />
					2/11/2026
				</Clock>
			</Tray>
		</Taskbar>

		<Watermark>
			<WatermarkLogo width="80" height="60" viewBox="0 0 80 60">
				<rect x="3" y="15" width="17" height="26" fill="rgba(216,216,214,0.72)" />
				<path d="M24 0 L59 20 L47 30 L59 40 L24 59 L24 41 L36 30 L24 15 Z" fill="rgba(216,216,214,0.72)" />
				<path d="M59 15 L77 30 L59 41 L52 30 Z" fill="rgba(216,216,214,0.72)" />
			</WatermarkLogo>
			<MadeWith>Made <span>with</span></MadeWith>
			<Brand>Castify</Brand>
		</Watermark>
	</Page>
);

export default App;
